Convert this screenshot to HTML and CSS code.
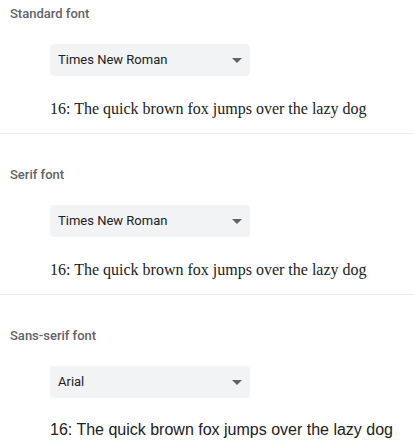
FILE: index.html
```html
<!DOCTYPE html>
<html lang="en">
<head>
<meta charset="utf-8">
<title>Fonts</title>
<link rel="stylesheet" href="styles.css">
</head>
<body>
<div class="page">
  <section class="font-section">
    <div class="label">Standard font</div>
    <div class="dropdown">
      <span class="dropdown-value">Times New Roman</span>
      <svg class="caret" width="10" height="5" viewBox="0 0 10 5"><path d="M0 0h10L5 5z"/></svg>
    </div>
    <div class="sample sample-serif">16: The quick brown fox jumps over the lazy dog</div>
  </section>
  <section class="font-section">
    <div class="label">Serif font</div>
    <div class="dropdown">
      <span class="dropdown-value">Times New Roman</span>
      <svg class="caret" width="10" height="5" viewBox="0 0 10 5"><path d="M0 0h10L5 5z"/></svg>
    </div>
    <div class="sample sample-serif">16: The quick brown fox jumps over the lazy dog</div>
  </section>
  <section class="font-section last">
    <div class="label">Sans-serif font</div>
    <div class="dropdown">
      <span class="dropdown-value">Arial</span>
      <svg class="caret" width="10" height="5" viewBox="0 0 10 5"><path d="M0 0h10L5 5z"/></svg>
    </div>
    <div class="sample sample-sans">16: The quick brown fox jumps over the lazy dog</div>
  </section>
</div>
</body>
</html>
```
FILE: styles.css
```css
html, body {
  margin: 0;
  padding: 0;
  background: #ffffff;
}

body {
  font-family: Roboto, "Liberation Sans", Arial, sans-serif;
  color: #202124;
}

.page {
  display: flex;
  flex-direction: column;
  padding-top: 4px;
}

.font-section {
  display: flex;
  flex-direction: column;
  padding-bottom: 14px;
  border-bottom: 1px solid #e8eaed;
}

.font-section + .font-section {
  padding-top: 31px;
}

.font-section.last {
  border-bottom: none;
}

.label {
  padding-left: 10px;
  font-size: 13px;
  line-height: 20px;
  font-weight: 500;
  color: #5f6368;
}

.dropdown {
  margin: 20px 0 0 50px;
  width: 200px;
  height: 32px;
  box-sizing: border-box;
  padding: 0 8px;
  display: flex;
  align-items: center;
  justify-content: space-between;
  background: #f1f3f4;
  border-radius: 4px;
}

.dropdown-value {
  font-size: 13px;
  line-height: 20px;
  color: #202124;
}

.caret {
  display: block;
  fill: #5f6368;
}

.sample {
  margin: 23px 0 0 50px;
  font-size: 16px;
  line-height: 20px;
  color: #202124;
  white-space: nowrap;
}

.sample-serif {
  font-family: "Liberation Serif", "Times New Roman", serif;
}

.sample-sans {
  font-family: "Liberation Sans", Arial, sans-serif;
  margin-top: 22px;
}
```
